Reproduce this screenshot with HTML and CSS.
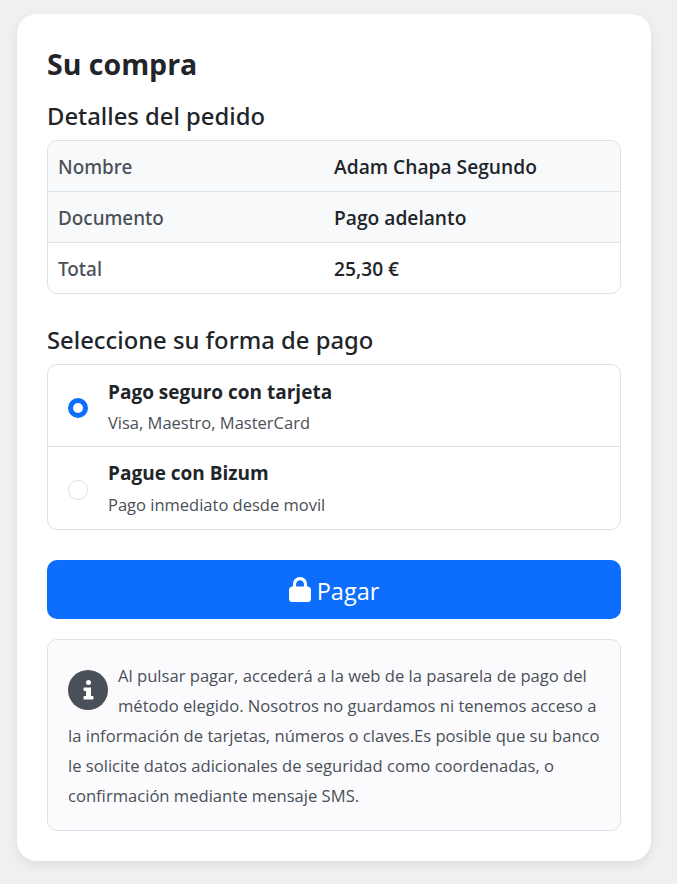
FILE: index.html
```html
<!DOCTYPE html>
<html lang="es">
<head>
<meta charset="utf-8">
<title>Su compra</title>
<link rel="stylesheet" href="styles.css">
</head>
<body>
<main class="card">
  <h1 class="title">Su compra</h1>
  <h2 class="subtitle">Detalles del pedido</h2>
  <div class="details">
    <div class="row shaded"><span class="label">Nombre</span><span class="value">Adam Chapa Segundo</span></div>
    <div class="row shaded"><span class="label">Documento</span><span class="value">Pago adelanto</span></div>
    <div class="row"><span class="label">Total</span><span class="value">25,30 €</span></div>
  </div>
  <h2 class="subtitle subtitle-pay">Seleccione su forma de pago</h2>
  <div class="methods">
    <label class="method">
      <span class="radio radio-on"></span>
      <span class="method-text"><strong class="method-name">Pago seguro con tarjeta</strong><span class="method-desc">Visa, Maestro, MasterCard</span></span>
    </label>
    <label class="method">
      <span class="radio"></span>
      <span class="method-text"><strong class="method-name">Pague con Bizum</strong><span class="method-desc">Pago inmediato desde movil</span></span>
    </label>
  </div>
  <button class="pay" type="button">
    <svg class="lock" viewBox="0 0 448 512" aria-hidden="true"><path d="M144 144v48h160v-48c0-44.200-35.800-80-80-80s-80 35.800-80 80zM80 192v-48C80 64.500 144.500 0 224 0s144 64.500 144 144v48h16c35.300 0 64 28.700 64 64v192c0 35.300-28.700 64-64 64H64c-35.300 0-64-28.700-64-64V256c0-35.300 28.700-64 64-64h16z"/></svg>
    <span class="pay-text">Pagar</span>
  </button>
  <div class="notice">
    <span class="info"><svg viewBox="0 0 11 20" aria-hidden="true"><circle cx="5.500" cy="2.500" r="2.500"/><path d="M1.500 7.500h6.500v8.500h1.500c.6 0 1 .5 1 1v1.500c0 .6-.4 1-1 1h-8c-.6 0-1-.4-1-1v-1.500c0-.5.4-1 1-1h1.500v-5h-1.500c-.6 0-1-.4-1-1v-1.500c0-.6.4-1 1-1z"/></svg></span>
    Al pulsar pagar, accederá a la web de la pasarela de pago del método elegido. Nosotros no guardamos ni tenemos acceso a la información de tarjetas, números o claves.Es posible que su banco le solicite datos adicionales de seguridad como coordenadas, o confirmación mediante mensaje SMS.
  </div>
</main>
</body>
</html>
```
FILE: styles.css
```css
* { box-sizing: border-box; }
html, body { margin: 0; }
body {
  background: #f0f0f0;
  padding: 14px 26px 23px 17px;
  font-family: "Open Sans", "Noto Sans", sans-serif;
  color: #212529;
}
.card {
  background: #fff;
  border-radius: 20px;
  padding: 30px;
  box-shadow: 0 4px 12px rgba(0,0,0,.08);
}
.title { margin: 0; font-size: 28.500px; line-height: 40px; font-weight: 700; }
.subtitle { margin: 16px 0 0; font-family: "Noto Sans", sans-serif; font-size: 23.800px; line-height: 32px; font-weight: 500; }
.subtitle-pay { margin-top: 30px; }
.details { margin-top: 8px; border: 1px solid #dee2e6; border-radius: 10px; overflow: hidden; }
.row { display: grid; grid-template-columns: 276px 1fr; height: 51px; align-items: center; padding: 1px 0 0 10px; border-top: 1px solid #dee2e6; font-size: 19.200px; }
.row:first-child { border-top: 0; height: 50px; }
.shaded { background: #f8f9fa; }
.label { font-family: "Noto Sans", sans-serif; font-size: 18.900px; font-weight: 500; color: #495057; }
.value { font-weight: 600; }
.methods { margin-top: 8px; border: 1px solid #dee2e6; border-radius: 10px; }
.method { display: flex; align-items: center; height: 81px; padding-left: 20px; gap: 20px; }
.method:first-child .method-text { padding-top: 2px; gap: 5px; }
.method + .method { border-top: 1px solid #dee2e6; height: 83px; }
.radio { width: 20px; height: 20px; margin-top: 3px; border-radius: 50%; border: 1px solid #dee2e6; background: #fff; flex: none; }
.radio-on { margin-top: 5px; border: 5.500px solid #0d6efd; }
.method-text { display: flex; flex-direction: column; gap: 6px; }
.method-name { font-size: 19px; line-height: 27px; font-weight: 700; }
.method-desc { font-size: 16.500px; line-height: 24px; color: #495057; }
.pay { display: flex; width: 100%; height: 59px; margin-top: 30px; align-items: center; justify-content: center; gap: 6px; background: #0d6efd; color: #fff; border: 0; border-radius: 10px; font: 400 23.500px "Open Sans", sans-serif; }
.pay-text { padding-top: 2px; }
.lock { width: 22px; height: 25px; fill: #fff; }
.notice { margin-top: 20px; padding: 21px 20px 19px; background: #fbfbfd; border: 1px solid #dee2e6; border-radius: 10px; font-size: 16.600px; line-height: 30px; color: #495057; }
.info { float: left; display: flex; width: 40px; height: 40px; margin: 9px 10px 0 0; border-radius: 50%; background: #495057; align-items: center; justify-content: center; }
.info svg { width: 11px; height: 20px; fill: #fff; }
```
